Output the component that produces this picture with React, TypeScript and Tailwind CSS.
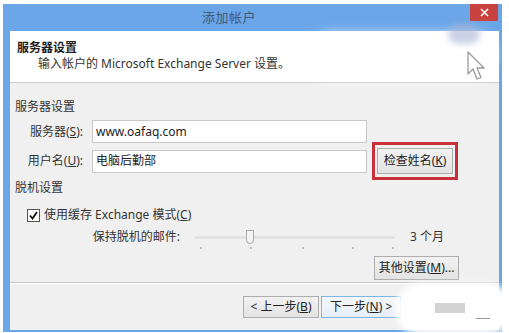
import React from "react";

const font = { fontFamily: '"Noto Sans", "Noto Sans CJK SC", sans-serif' };

function Btn({ children, className = "" }: { children: React.ReactNode; className?: string }) {
  return (
    <div
      className={
        "flex items-center justify-center border border-[#adadad] bg-gradient-to-b from-[#f2f2f2] to-[#e3e3e3] text-[12px] leading-none text-[#222] " +
        className
      }
    >
      {children}
    </div>
  );
}

export default function App() {
  return (
    <div className="relative h-[333px] w-[509px] overflow-hidden bg-white" style={font}>
      <div className="ml-[3px] mt-[4px] flex h-[328px] w-[499px] flex-col bg-[#6aa6e8] pb-[2px] pl-[7px] pr-[3px]">
        {/* title bar */}
        <div className="flex h-[27px] shrink-0 items-start justify-between pl-[192px]">
          <span className="mt-[5px] text-[13px] leading-[17px] tracking-[0.5px] text-[#43597a]">添加帐户</span>
          <div className="mr-[1px] flex h-[17px] w-[28px] items-center justify-center bg-[#c8423f]">
            <svg width="9" height="9" viewBox="0 0 9 9">
              <path d="M1 1 L8 8 M8 1 L1 8" stroke="#ffffff" strokeWidth="1.6" />
            </svg>
          </div>
        </div>
        {/* content */}
        <div className="flex flex-1 flex-col bg-[#f0f0f0] text-[#1e1e1e]">
          <div className="flex h-[52px] shrink-0 flex-col border-b border-[#cdcdcd] bg-white pl-[7px] pt-[9px]">
            <div className="text-[12px] font-bold leading-[16px]">服务器设置</div>
            <div className="pl-[21px] text-[12px] leading-[16px] text-[#333]">
              输入帐户的 Microsoft Exchange Server 设置。
            </div>
          </div>
          <div className="flex flex-col pl-[5px]">
            <div className="mt-[16px] text-[12px] leading-[16px] text-[#333]">服务器设置</div>
            <div className="mt-[5px] flex items-center">
              <div className="w-[68px] text-right text-[12px] text-[#333]">
                服务器(<span className="underline">S</span>):
              </div>
              <div className="ml-[9px] flex h-[23px] w-[275px] items-center border border-[#c8c8c8] bg-white pl-[3px] text-[12px] text-[#222]">
                www.oafaq.com
              </div>
            </div>
            <div className="mt-[5px] flex h-[26px] items-center">
              <div className="w-[68px] text-right text-[12px] text-[#333]">
                用户名(<span className="underline">U</span>):
              </div>
              <div className="ml-[9px] flex h-[23px] w-[275px] items-center border border-[#c8c8c8] bg-white pl-[3px] text-[12px] text-[#222]">
                电脑后勤部
              </div>
              <div className="relative ml-[10px]">
                <Btn className="h-[26px] w-[76px]">
                  检查姓名(<span className="underline">K</span>)
                </Btn>
                <div className="pointer-events-none absolute -bottom-[6px] -left-[5px] -right-[5px] -top-[6px] border-[3px] border-[#c8313a]" />
              </div>
            </div>
            <div className="mt-[6px] text-[12px] leading-[16px] text-[#333]">脱机设置</div>
            <div className="mt-[11px] flex items-center pl-[12px]">
              <div className="flex h-[13px] w-[13px] items-center justify-center border border-[#555] bg-white">
                <svg width="11" height="11" viewBox="0 0 11 11">
                  <path d="M2 5.5 L4.5 8.5 L9 2" fill="none" stroke="#111" strokeWidth="1.8" />
                </svg>
              </div>
              <span className="ml-[4px] text-[12px] leading-[16px] text-[#333]">
                使用缓存 Exchange 模式(<span className="underline">C</span>)
              </span>
            </div>
            <div className="mt-[6px] flex h-[22px] items-start">
              <div className="w-[165px] text-right text-[12px] leading-[16px] text-[#333]">保持脱机的邮件:</div>
              <div className="relative ml-[15px] h-[22px] w-[200px]">
                <div className="absolute left-0 right-0 top-[7px] h-[3px] bg-[#e2e2e2]" />
                <div className="absolute left-[51px] top-[1px] h-[14px] w-[8px] rounded-b-[4px] border border-[#a8a8a8] bg-[#f4f4f4]" />
                <div className="absolute left-[5px] top-[18px] h-[2px] w-[2px] bg-[#bbb]" />
                <div className="absolute left-[55px] top-[18px] h-[2px] w-[2px] bg-[#bbb]" />
                <div className="absolute left-[107px] top-[18px] h-[2px] w-[2px] bg-[#bbb]" />
                <div className="absolute left-[157px] top-[18px] h-[2px] w-[2px] bg-[#bbb]" />
                <div className="absolute left-[197px] top-[18px] h-[2px] w-[2px] bg-[#bbb]" />
              </div>
              <div className="ml-[15px] text-[12px] leading-[16px] text-[#333]">3 个月</div>
            </div>
            <div className="mt-[5px] flex justify-end pr-[40px]">
              <Btn className="h-[24px] w-[85px]">
                其他设置(<span className="underline">M</span>)...
              </Btn>
            </div>
          </div>
          <div className="mt-[2px] h-[2px] border-t border-[#c6c6c6] bg-white" />
          <div className="mt-[12px] flex pl-[233px]">
            <Btn className="h-[22px] w-[76px]">
              &lt; 上一步(<span className="underline">B</span>)
            </Btn>
            <div className="ml-[2px] flex h-[22px] w-[80px] items-center justify-start border border-[#7eb4ea] bg-gradient-to-b from-[#f4f8fc] to-[#e6eef7] pl-[8px] text-[12px] leading-none text-[#222]">
              下一步(<span className="underline">N</span>) &gt;
            </div>
            <Btn className="ml-[6px] h-[22px] w-[76px]">取消</Btn>
          </div>
        </div>
      </div>

      {/* watermark smudges */}
      <div className="pointer-events-none absolute left-[310px] top-[34px] h-[42px] w-[185px] rounded-[40px] bg-white opacity-95 blur-[6px]" />
      <div className="pointer-events-none absolute left-[448px] top-[24px] h-[20px] w-[32px] rounded-full bg-[#a9b4d6] opacity-60 blur-[3px]" />
      <div className="pointer-events-none absolute left-[395px] top-[283px] h-[52px] w-[118px] rounded-[26px] bg-white blur-[3px]" />
      <div className="pointer-events-none absolute left-[435px] top-[303px] h-[10px] w-[30px] bg-[#d3d3d3]" />
      <div className="pointer-events-none absolute left-[476px] top-[318px] h-[1px] w-[14px] bg-[#999]" />
      {/* cursor */}
      <svg className="pointer-events-none absolute left-[466px] top-[50px]" width="22" height="32" viewBox="0 0 22 32">
        <path d="M2 2 L2 24 L7 19 L11 29 L15 27.5 L11 18 L18 18 Z" fill="#ffffff" stroke="#9a9a9a" strokeWidth="1.3" strokeLinejoin="round" />
      </svg>
    </div>
  );
}
